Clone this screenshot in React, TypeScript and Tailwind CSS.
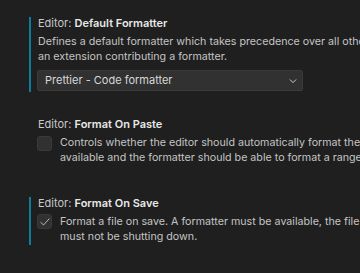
import React from "react";

const font = { fontFamily: "Inter, 'Noto Sans', sans-serif" };

function Check() {
  return (
    <svg width="12" height="12" viewBox="0 0 16 16" fill="none">
      <path d="M2.5 8.6 L6 12 L13.5 3.8" stroke="#d4d4d4" strokeWidth="1.1" strokeLinecap="round" strokeLinejoin="round" />
    </svg>
  );
}

function Chevron() {
  return (
    <svg width="10" height="10" viewBox="0 0 16 16" fill="none">
      <path d="M3.5 6 L8 10.5 L12.5 6" stroke="#cccccc" strokeWidth="1.6" strokeLinecap="round" strokeLinejoin="round" />
    </svg>
  );
}

export default function App() {
  return (
    <div
      className="w-[360px] h-[273px] bg-[#1f1f1f] overflow-hidden text-[10.7px] text-[#c4c4c4] whitespace-nowrap"
      style={font}
    >
      {/* Default Formatter */}
      <div className="mt-[17px] ml-[29px] border-l-2 border-[#0c7d9d] pl-[6px] pb-[1px]">
        <div className="text-[11px] leading-[12px] text-[#c8c8c8] pl-[1px]">
          Editor: <span className="font-semibold text-[#e8e8e8]">Default Formatter</span>
        </div>
        <div className="mt-[5px] leading-[15px] pl-[1px]">
          <div>Defines a default formatter which takes precedence over all other formatter settings. Must be the identifier of</div>
          <div>an extension contributing a formatter.</div>
        </div>
        <div className="mt-[6px] w-[266px] h-[21px] bg-[#313131] border border-[#3a3a3a] rounded-[2px] flex items-center justify-between pl-[7px] pr-[4px] text-[11px] text-[#d8d8d8]">
          <span>Prettier - Code formatter</span>
          <Chevron />
        </div>
      </div>

      {/* Format On Paste */}
      <div className="mt-[26px] ml-[29px] border-l-2 border-transparent pl-[6px]">
        <div className="text-[11px] leading-[12px] text-[#c8c8c8] pl-[1px]">
          Editor: <span className="font-semibold text-[#e8e8e8]">Format On Paste</span>
        </div>
        <div className="mt-[5px] flex gap-[8px]">
          <div className="mt-[1px] w-[15px] h-[15px] shrink-0 bg-[#313131] border border-[#3a3a3a] rounded-[3px]" />
          <div className="leading-[15px]">
            <div>Controls whether the editor should automatically format the pasted content. A formatter must be</div>
            <div>available and the formatter should be able to format a range in a document.</div>
          </div>
        </div>
      </div>

      {/* Format On Save */}
      <div className="mt-[32px] ml-[29px] border-l-2 border-[#0c7d9d] pl-[6px] pb-[1px]">
        <div className="text-[11px] leading-[12px] text-[#c8c8c8] pl-[1px]">
          Editor: <span className="font-semibold text-[#e8e8e8]">Format On Save</span>
        </div>
        <div className="mt-[5px] flex gap-[8px]">
          <div className="w-[15px] h-[15px] shrink-0 bg-[#313131] border border-[#3a3a3a] rounded-[3px] flex items-center justify-center">
            <Check />
          </div>
          <div className="leading-[15px]">
            <div>Format a file on save. A formatter must be available, the file must not be saved after delay, and the editor</div>
            <div>must not be shutting down.</div>
          </div>
        </div>
      </div>
    </div>
  );
}
